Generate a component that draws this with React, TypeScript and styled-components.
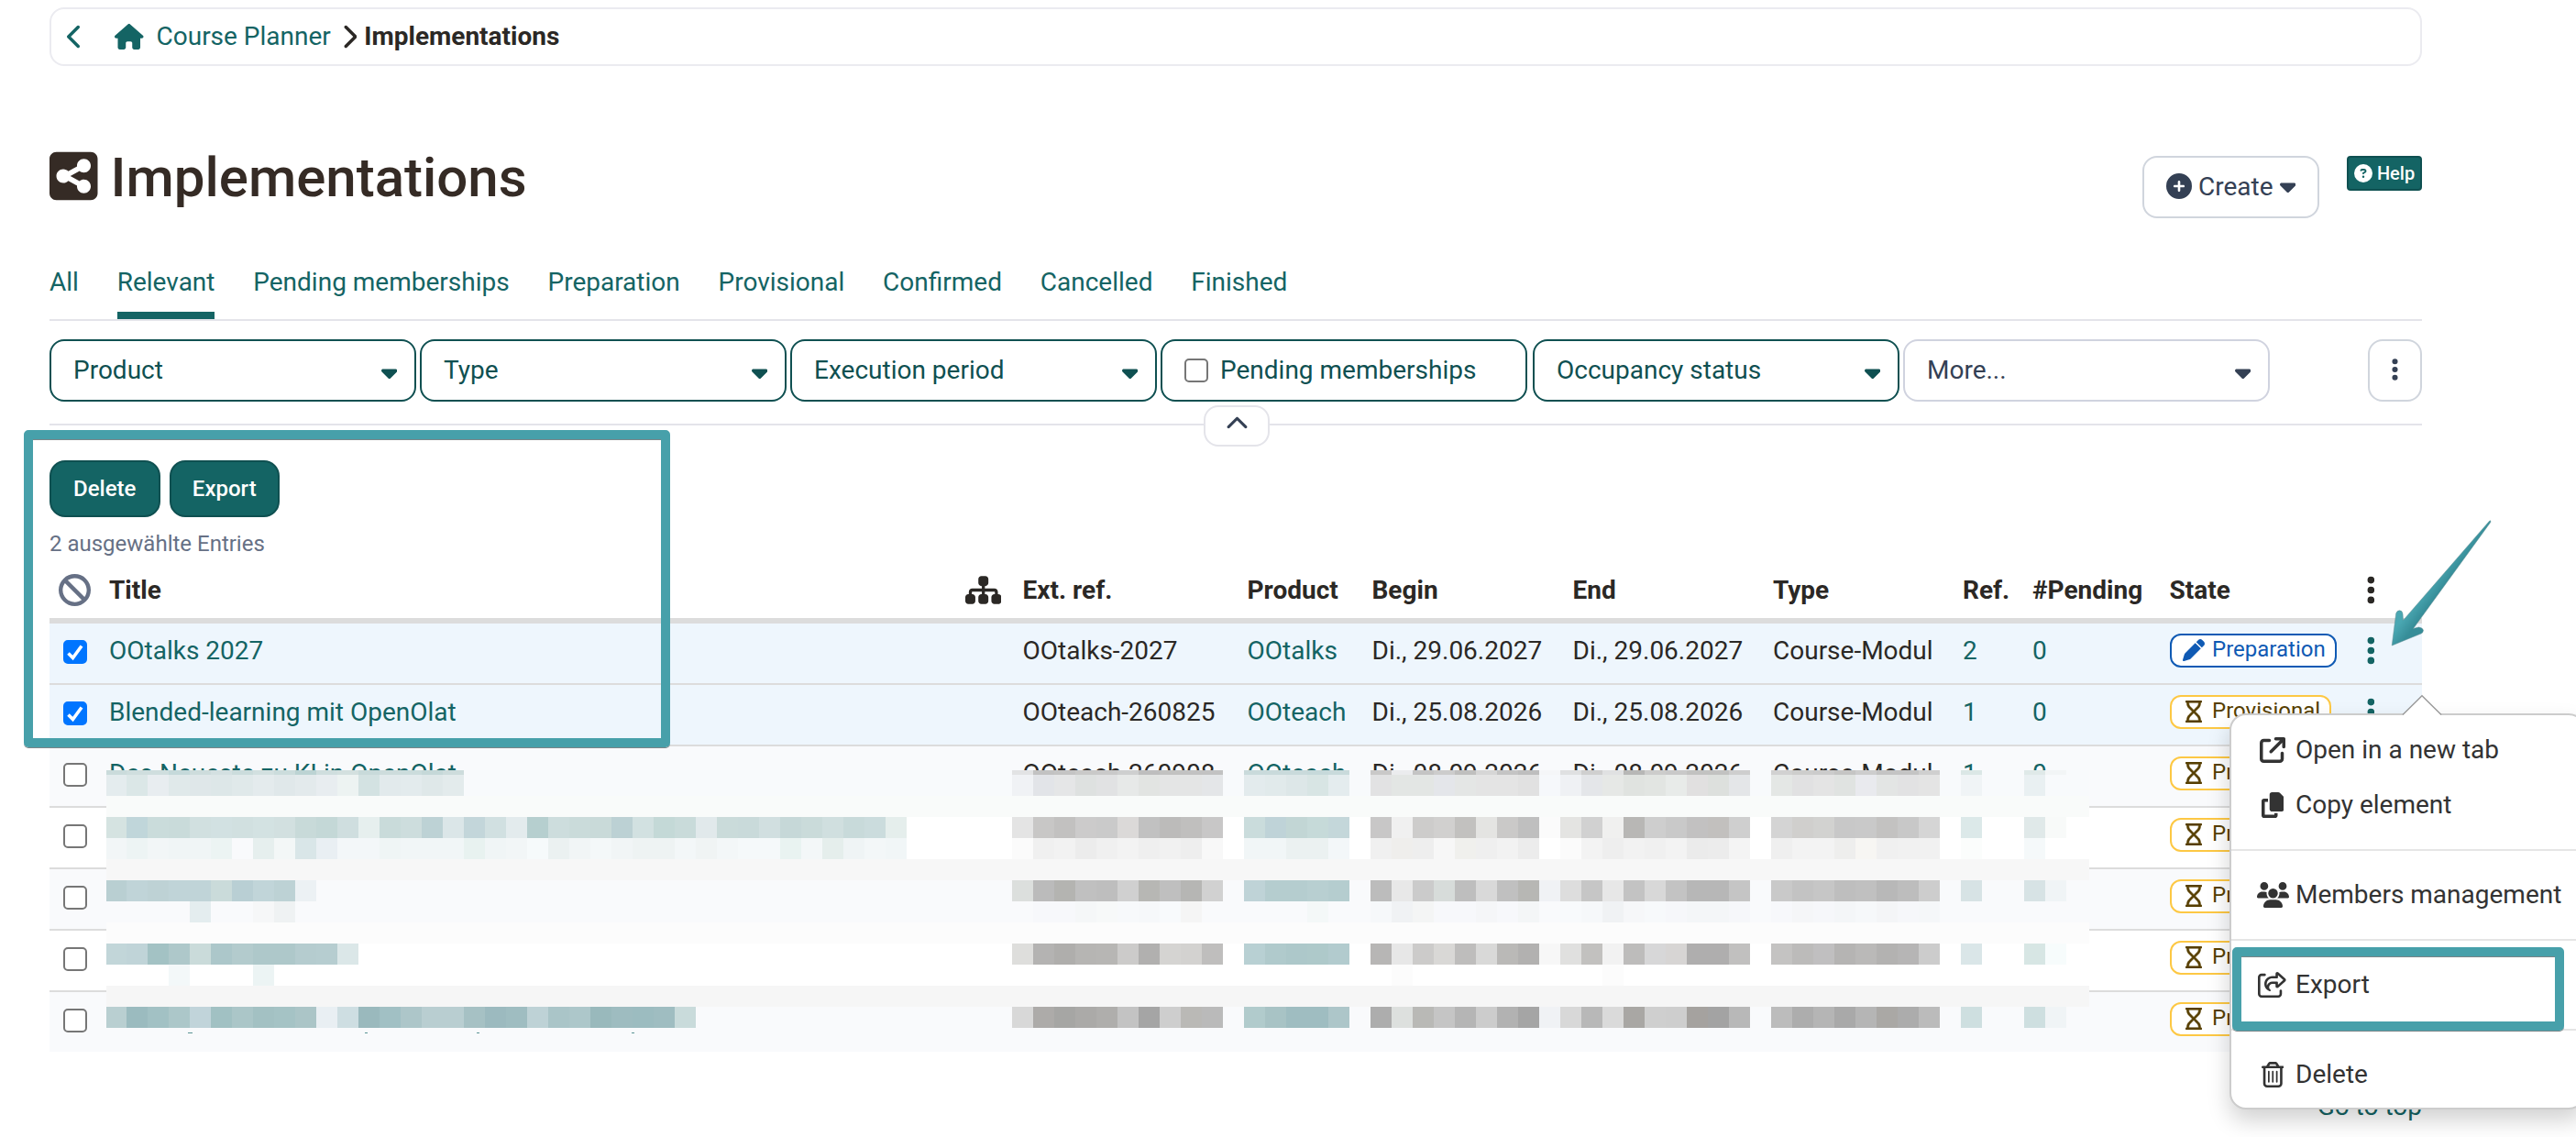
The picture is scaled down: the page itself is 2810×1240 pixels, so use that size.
import React, { FC, ReactNode } from "react";
import styled, { createGlobalStyle, css } from "styled-components";
import {
  FaArrowUpRightFromSquare,
  FaBan,
  FaCaretDown,
  FaChevronLeft,
  FaChevronRight,
  FaChevronUp,
  FaCirclePlus,
  FaCircleQuestion,
  FaCopy,
  FaEllipsisVertical,
  FaHouse,
  FaPen,
  FaRegHourglass,
  FaRegShareFromSquare,
  FaRegTrashCan,
  FaSitemap,
  FaSquareShareNodes,
  FaUsers,
} from "react-icons/fa6";

const GlobalStyle = createGlobalStyle`
  :root {
    --teal: #146464;
    --tealDark: #0f5051;
    --slate: #344054;
    --line: #e4e4ea;
    --text: #2b2825;
    --mark: #47a0aa;
  }
  * { box-sizing: border-box; }
  html, body { margin: 0; padding: 0; background: white; overflow: hidden; }
  body {
    font-family: Roboto, "Liberation Sans", sans-serif;
    font-size: 28px;
    line-height: 40px;
    color: var(--text);
  }
`;

const Page = styled.div`
  position: relative;
  width: 2810px;
  height: 1240px;
  padding: 8px 168px 0 54px;
  overflow: hidden;
  background: white;
`;

/* $w is the width of the glyph's view box, every glyph is 512 high */
const Icon = styled.span<{ $size?: number; $color?: string; $w?: number }>`
  display: inline-flex;
  flex: none;
  font-size: ${(p) => p.$size || 28}px;
  color: ${(p) => p.$color || "inherit"};
  svg {
    flex: none;
    height: 1em;
    width: ${(p) => (p.$w || 512) / 512}em;
  }
`;

/* breadcrumb */
const Breadcrumb = styled.nav`
  display: flex;
  align-items: center;
  height: 64px;
  padding-left: 17px;
  border: 2px solid #ebebf0;
  border-radius: 16px;
`;
const BackLink = styled.a`
  display: flex;
  width: 52px;
  color: var(--teal);
`;
const Crumb = styled.a`
  display: flex;
  align-items: center;
  gap: 14px;
  margin-right: 11px;
  color: var(--teal);
`;
const CurrentCrumb = styled.span`
  margin-left: 8px;
  font-weight: 700;
`;

/* heading */
const Heading = styled.header`
  display: flex;
  height: 202px;
  padding-top: 85px;
`;
const PageTitle = styled.h1`
  display: flex;
  align-items: center;
  gap: 14px;
  flex: 1;
  height: 74px;
  margin: 0;
  font-size: 60px;
  font-weight: 500;
  color: #352b25;
  ${Icon} {
    margin-top: -4px;
  }
`;
const CreateButton = styled.button`
  display: flex;
  align-items: center;
  justify-content: center;
  gap: 7px;
  width: 193px;
  height: 68px;
  margin: 13px 30px 0 0;
  padding: 0 0 2px;
  border: 2px solid #d0d5dd;
  border-radius: 16px;
  background: white;
  font: inherit;
  color: var(--slate);
`;
const ButtonText = styled.span`
  padding-top: 2px;
`;
const HelpButton = styled.button`
  display: flex;
  align-items: center;
  justify-content: center;
  gap: 5px;
  width: 82px;
  height: 38px;
  margin: 13px 0 0;
  padding: 0;
  border: 2px solid var(--tealDark);
  border-radius: 4px;
  background: var(--teal);
  font: 500 20px Roboto, sans-serif;
  color: white;
`;

/* tabs */
const Tabs = styled.div`
  display: flex;
  gap: 41.8px;
  height: 76px;
  border-bottom: 2px solid var(--line);
`;
const Tab = styled.a<{ $active?: boolean }>`
  height: 74px;
  padding-top: 1px;
  line-height: 65px;
  border-bottom: 8px solid ${(p) => (p.$active ? "var(--teal)" : "transparent")};
  color: var(--teal);
`;

/* filters */
const Filters = styled.div`
  position: relative;
  display: flex;
  gap: 4px;
  height: 114px;
  padding-top: 20px;
  border-bottom: 2px solid var(--line);
`;
const FilterButton = styled.button<{ $muted?: boolean; $check?: boolean }>`
  display: flex;
  align-items: center;
  gap: 13px;
  width: 400px;
  height: 68px;
  margin: 0 ${(p) => (p.$check ? 2 : 0)}px 0 0;
  padding: 0 19px 1px 24px;
  border: 2px solid ${(p) => (p.$muted ? "#d0d3df" : "var(--tealDark)")};
  border-radius: 16px;
  background: white;
  font: inherit;
  color: ${(p) => (p.$muted ? "var(--slate)" : "var(--tealDark)")};
  > ${Icon} {
    margin: 4px 0 0 auto;
  }
`;
const SettingsButton = styled.button`
  display: flex;
  align-items: center;
  justify-content: center;
  width: 59px;
  height: 68px;
  margin-left: auto;
  padding: 0 0 3px;
  border: 2px solid #d0d5dd;
  border-radius: 16px;
  background: white;
  color: var(--slate);
`;
const CollapseButton = styled.button`
  position: absolute;
  left: 1259px;
  bottom: -25px;
  display: flex;
  align-items: center;
  justify-content: center;
  width: 72px;
  height: 45px;
  padding: 0 0 4px;
  border: 2px solid var(--line);
  border-radius: 16px;
  background: white;
  color: var(--slate);
`;

/* batch actions */
const BatchActions = styled.div`
  display: flex;
  gap: 10px;
  margin: 38px 0 9px;
`;
const BatchButton = styled.button`
  width: 120.5px;
  height: 62px;
  padding: 0 0 1px;
  border: 2px solid var(--tealDark);
  border-radius: 17px;
  background: var(--teal);
  font: 500 24px Roboto, sans-serif;
  color: white;
`;
const Selected = styled.p`
  height: 39px;
  margin: 0;
  padding-top: 1px;
  font-size: 24px;
  line-height: 38px;
  color: #667085;
`;

/* table */
const columns = css`
  display: grid;
  grid-template-columns: 65px 934px 62.5px 245px 136px 219px 218.5px 207px 76px 149.5px 215px 60px;
`;
const HeadRow = styled.div`
  ${columns}
  align-items: center;
  height: 68px;
  border-bottom: 6px solid #dcdcdc;
  font-weight: 700;
  line-height: 42px;
`;
const HeadIcon = styled.span<{ $left?: number }>`
  display: flex;
  padding-left: ${(p) => p.$left || 0}px;
`;
const HeadText = styled.span`
  padding-top: 1px;
`;
const Row = styled.div<{ $bg: string }>`
  ${columns}
  height: 67px;
  padding-top: 9px;
  border-top: 2px solid #dcdcdc;
  background: ${(p) => p.$bg};
  line-height: 42px;
  &:nth-child(2) {
    height: 65px;
    border-top: 0;
  }
`;
const Link = styled.a`
  color: var(--teal);
`;
const RowMenu = styled.a`
  display: flex;
  align-items: center;
  height: 40px;
  color: var(--teal);
`;
const Box = styled.span<{ $checked?: boolean }>`
  display: flex;
  flex: none;
  align-items: center;
  justify-content: center;
  width: 26px;
  height: 26px;
  border: 2px solid ${(p) => (p.$checked ? "#0075ff" : "#767676")};
  border-radius: 5px;
  background: ${(p) => (p.$checked ? "#0075ff" : "white")};
`;
const SelectCell = styled.span`
  padding: 9px 0 0 15px;
`;
const Badge = styled.span<{ $kind: string }>`
  display: flex;
  align-items: center;
  width: max-content;
  height: 37px;
  margin-top: 2px;
  padding: 0 10px 2px 12px;
  border: 2px solid ${(p) => (p.$kind === "Preparation" ? "#0f5ab4" : "#fdc844")};
  border-radius: 12px;
  background: white;
  font-size: 24px;
  line-height: 33px;
  color: ${(p) => (p.$kind === "Preparation" ? "#0f5ab4" : "#573f00")};
  ${Icon} {
    width: 24px;
    margin-right: 8.5px;
    justify-content: center;
  }
`;
const GoTop = styled.a`
  display: block;
  margin-top: 40px;
  text-align: right;
  color: var(--teal);
`;

/* mosaic that hides the confidential cells */
const Mosaic = styled.div`
  position: absolute;
  left: 116px;
  top: 840px;
  width: 2163px;
`;
const Band = styled.div<{ $h: number; $bg: string }>`
  display: grid;
  grid-template-columns: 22px repeat(93, 23px) 2px;
  grid-template-rows: ${(p) => p.$h}px;
  height: ${(p) => p.$h}px;
  background: ${(p) => p.$bg};
`;
const Descenders = styled.div`
  display: grid;
  grid-template-columns: 89px 5px 188px 3px 119px 3px 166px 3px;
  height: 1px;
  > :nth-child(even) {
    background: #5c9495;
  }
`;

/* row menu */
const Menu = styled.div`
  position: absolute;
  left: 2432px;
  top: 778px;
  width: 388px;
  height: 432px;
  padding: 8px 0;
  border: 2px solid #ccc;
  border-radius: 18px;
  background: white;
  box-shadow: 0 12px 24px rgba(0, 0, 0, 0.18);
`;
const MenuItem = styled.div`
  display: flex;
  align-items: center;
  height: 60px;
  padding-left: 24px;
  line-height: 60px;
  color: #333;
  ${Icon} {
    width: 42px;
    margin-right: 4px;
    justify-content: center;
  }
`;
const Divider = styled.hr`
  height: 2px;
  margin: 18px 0;
  border: 0;
  background: #e5e5e5;
`;
const MenuTip = styled.svg`
  position: absolute;
  left: 2620px;
  top: 757px;
`;

/* annotations */
const Frame = styled.div<{ $x: number; $y: number; $w: number; $h: number }>`
  position: absolute;
  left: ${(p) => p.$x}px;
  top: ${(p) => p.$y}px;
  width: ${(p) => p.$w}px;
  height: ${(p) => p.$h}px;
  border-radius: 5px;
  border: 10px solid var(--mark);
  box-shadow: 0 1px 0 #7a8588, inset 0 1px 0 #7a8588;
`;
const Arrow = styled.svg`
  position: absolute;
  left: 2600px;
  top: 560px;
`;

const tabs = [
  "All", "Relevant", "Pending memberships", "Preparation",
  "Provisional", "Confirmed", "Cancelled", "Finished",
];

interface IEntry {
  title?: string;
  ref?: string;
  product?: string;
  date?: string;
  type?: string;
  refs?: string;
  pending?: string;
  state: string;
  checked?: boolean;
  bg: string;
}

const entries: IEntry[] = [
  { title: "OOtalks 2027", ref: "OOtalks-2027", product: "OOtalks", date: "Di., 29.06.2027", type: "Course-Modul", refs: "2", pending: "0", state: "Preparation", checked: true, bg: "#eef6fd" },
  { title: "Blended-learning mit OpenOlat", ref: "OOteach-260825", product: "OOteach", date: "Di., 25.08.2026", type: "Course-Modul", refs: "1", pending: "0", state: "Provisional", checked: true, bg: "#eef6fd" },
  { title: "Das Neueste zu KI in OpenOlat", ref: "OOteach-260908", product: "OOteach", date: "Di., 08.09.2026", type: "Course-Modul", refs: "1", pending: "0", state: "Provisional", bg: "#f9fafc" },
  { state: "Provisional", bg: "#fff" },
  { state: "Provisional", bg: "#f9fafc" },
  { state: "Provisional", bg: "#fff" },
  { state: "Provisional", bg: "#f9fafc" },
];

interface IBand {
  h: number;
  bg: string;
  runs: [number, string][];
}

// a run is a first column and the colours of the cells that follow it
const bands: IBand[] = [
  {
    h: 5, bg: "#f8fafc", runs: [
      [1, "cadbdb cfdede cfdede c5d9da cddcdc d3e0e1 cbdcdc d2e0e0 cbdcdc bcd3d3 cfdede d3e0df c8dada cddcdc cbdcdc c5d8d8 cddcdc"],
      [44, "e2e3e4 c2c2c2 c4c4c4 c9c9c8 c9c9c9 cecfcf bebebe c2c2c1 c2c2c2 c2c2c2"],
      [55, "c9dadb c9dadb c9dadb c6d9da c9dadb"],
      [61, "c9c8c8 ebecee c4c4c4 cccccc bfbfbe d6d6d6 c4c4c4 bebebe f5f6f8"],
      [70, "dfe0e1 cfcfcf e0e1e2 b7b7b6 cccccb c9c9c9 c2c2c1 c2c2c1 cecece"],
      [80, "d1d1d1 cdcdcc cbcbcb c5c5c4 cdcdcd c4c4c4 c4c4c4 cfcfcf"],
      [89, "dbe7e6"], [92, "dfe9e8 f2f5f6"],
    ],
  },
  {
    h: 23, bg: "#f8fafc", runs: [
      [1, "e4ecee dbe7e7 e8edf0 e0e9ea dfe7e9 dde7e8 e0e9ea e4ebed e0e8ea e3eaec e8edf0 edf3f2 d3e2e2 e2eaec e3ebed dfe8e9 e3ebec"],
      [44, "f0f2f5 e2e4e8 e5e6e7 dee1e0 e1e2e3 e7e9e8 e2e4e2 e4e5e5 e4e5e5 e4e6e8"],
      [55, "e3ebed e1eaeb dde7e8 d8e5e4 e4ecee"],
      [61, "e2e2e3 e3e6e4 e3e6e4 e4e6ea e4e6e5 e4e4e4 e4e4e4 e1e1e1 f6f8fb"],
      [70, "eff1f4 e4e6e9 e6e8e6 e0e3e0 e2e5e2 e8ebe9 e1e0e0 dde0dd e4e6e8"],
      [80, "e4e7e5 e1e1e2 e4e4e4 e0e3e1 e9eaee e3e5e4 e2e2e3 e4e4e4"],
      [89, "f0f4f6"], [92, "e9f0f2 f8fafc"],
    ],
  },
  { h: 23, bg: "#f9fbfa", runs: [] },
  {
    h: 23, bg: "#fff", runs: [
      [1, "d5e3e1 c0d6da cadcdb c9dbda d1e0e0 d2e1e2 d1e0e0 d3e2e2 d2e0e0 c8dad9 c4d8d7 cfdedf e6efee c9dbda cddddd bdd2d5 dbe6e8 c3d6da d1e0e1 e3ebed b6cfcf cddddd cadbda c9dad9 bcd1d4 d2e1e1 c4d9d7 c9dbda e1e9eb cadbda c9dada d1dfe0 c6d8d8 cadbda d0dfdf c8dada cbdcdd e5eeec"],
      [44, "e4e4e4 c8c7c6 c2c1c0 cccbcb cacaca dbd9d8 c1c1c1 bcbbba c0bfbe c8c7c7"],
      [55, "cadcdc bfd3d8 c2d6d5 c6dad9 c4d7da"],
      [61, "c8c7c7 f0f0f0 cdcccb d1d0cf c2c1bf e4e4e2 cac9c8 bfbfbf fbfbfb"],
      [70, "e4e4e2 d1d1d1 f0f0ef b8b7b5 cecece c9c9c9 c2c1c1 c2c0be cfcfcf"],
      [80, "d4d4d4 d0cfcd d2d2d0 c8c8c8 c9c9c9 c3c2c1 c8c8c8 d5d5d5"],
      [89, "dce9e9"], [92, "e0e9e9 f8faf9"],
    ],
  },
  {
    h: 23, bg: "#fff", runs: [
      [1, "f2f6f7 edf4f4 f2f6f7 f0f5f6 f0f5f6 ecf4f3 f9fafc e6efee f3f7f7 d9e6e8 e9eff3 f3f7f9 f3f7f9 eff5f5 f1f6f7 f1f6f7 f1f6f7 e8f2f0 f0f5f6 f2f6f7 f6fafb ebf1f1 f1f5f6 f4f8f9 f1f5f6 eef3f3 eef3f3 f3f7f8 f0f4f4 f3f7f8 f5f9fa f5f9fa e9f3f1 f3f7f8 e5eeec eff4f5 f3f7f8 f1f6f7"],
      [44, "fbfbfb f0f0f0 f2f2f2 ececec f0f0f0 f3f3f3 efefef f1f1f1 eeeeee f8f8f8"],
      [55, "f1f6f7 f1f6f7 ebf1f1 ebf1f1 f3f7f9"],
      [61, "f0f0f0 efeeec eeeeee f7f7f7 f0f0ed efefef f2f2f2 ececec ffffff"],
      [70, "fbfbfb f3f3f3 eeeeee f2f2f2 f0f0f0 f3f3f3 ebebeb ececec f4f4f4"],
      [80, "efefef f3f3f3 f3f3f3 eeeeed f7f6f3 f0f0f0 f1f1f1 f1f1f1"],
      [89, "fbfdfc"], [92, "f5f9fa"],
    ],
  },
  { h: 23, bg: "#f7f7f7", runs: [] },
  {
    h: 23, bg: "#f9fafc", runs: [
      [1, "b9cfd2 c0d4d8 bed2d5 c0d4d8 c0d4d8 cadbda b9cfd4 c1d5d9 bdd2d5 ecf1f4"],
      [44, "dcdfdd bbbbbb b4b4b1 c0c0c0 bebebe d0d0d0 b7b7b4 bfbfbf b6b6b4 d1d1d1"],
      [55, "bfd3d7 b5cdcf b5cdcf b8cfd1 b5cdcf"],
      [61, "bcbcbc e8e8e8 cbcbcb d7dcda bebebe d9d9d9 c0c0c0 b7b7b4 f0f2f5"],
      [70, "dddddd c6c6c6 e7e7e7 c3c3c3 d8d8d8 c3c3c3 b7b7b7 b7b7b7 c5c5c5"],
      [80, "c9c9c9 c3c3c3 c6c6c6 bebebe c0c0c0 b8b8b8 bdbdbd cdcdcd"],
      [89, "d7e3e5"], [92, "d7e3e5 f0f4f6"],
    ],
  },
  {
    h: 23, bg: "#f9fafc", runs: [
      [5, "e4edef"], [8, "f6f7f8 eff2f3"],
      [45, "f7f8fb f7f8fb f5f7f8 f7f9f9 f7f9fb f6f8fa f8fafc f5f5f5"],
      [58, "f4f8f8"],
      [61, "f6f8fa f0f2f4 f4f5f5 f7f8fb f7f8fb f5f6f8 f7f8fb f4f6f7"],
      [70, "f8fafc f6f8fa f0f2f4 f6f7f9 f7f9fb f6f7fa f4f6f8 f4f6f8 f6f7fa"],
      [80, "f7f8fb f5f6f8 f6f7fa f4f6f8 f6f8fa f4f5f7 f6f7fa f5f7f9"],
    ],
  },
  { h: 23, bg: "#fcfcfc", runs: [] },
  {
    h: 23, bg: "#fff", runs: [
      [1, "c2d6d9 c0d4d8 a3c2c4 aec8ca cadbda acc7ca b3cbcd aec8ca aec8ca b5cccf b6cdd0 dbe7e8"],
      [44, "dededc b4b3b2 afaeac b6b5b3 b7b6b4 cccbca b1b0af d5d4d2 d3d2d0 bfbebd"],
      [55, "b8d0d3 b0cacc adc8ca aec9ca b2cbce"],
      [61, "b7b6b5 e7e7e7 cccbca d9d8d6 bebdbc d9d9d8 bab9b7 b2b1b0 f7f7f7"],
      [70, "e0e0df c2c1bf f2f2f2 bdbcbb d7d7d8 d7d5d4 afaeae afaeae c1c0bf"],
      [80, "c4c3c2 bcbbba c0bfc0 b5b4b3 bab9b8 b3b2b1 b6b5b5 cccccc"],
      [89, "dae6e8"], [92, "d7e6e4 f7fcfc"],
    ],
  },
  { h: 23, bg: "#fff", runs: [[4, "f3f8f9"], [8, "ecf4f4"], [62, "fcfcfc"], [72, "fcfcfc"]] },
  { h: 23, bg: "#f6f6f6", runs: [] },
  {
    h: 23, bg: "#f9fafc", runs: [
      [1, "b9cfd1 9bbbbf a2c1c4 acc7c9 c1d4da a1c1c3 abc6c8 a3c1c3 a5c3c5 abc5c7 e9eff3 cedee2 9ab9bd a1c0c4 adc6c9 b9ced1 b9ced1 a6c1c4 9cbabf 9fbdc1 bed2d6 aac5c8 adc7ca 99b9bc 9ebcc0 9cbcc0 9fbdc1 c9dbdb"],
      [44, "d8d8d8 adaba9 a6a6a4 abaaa8 afaeac c3c3c3 a5a5a5 cecece bab9b6 bababa"],
      [55, "b1cbcc a8c3c5 9fbdc1 9fbdc1 adc6c9"],
      [61, "adadad dde0de b9b9b6 c5c5c5 b5b5b5 cccccc b2b2b2 a5a5a5 f0f2f5"],
      [70, "d8d8d8 b8b8b8 dadada a9a7a4 cfcfcf cecece a5a29f a3a3a3 b8b8b8"],
      [80, "bcbcbc adadad b5b5b5 a9a9a9 b5b5b5 aaa8a5 acacac bbbbbb"],
      [89, "cedfe0"], [92, "cedfe0 f0f4f6"],
    ],
  },
  { h: 5, bg: "#f9fafc", runs: [] },
];

const Filter: FC<{ label: string; muted?: boolean }> = ({ label, muted }) => (
  <FilterButton $muted={muted}>
    {label}
    <Icon $w={320}><FaCaretDown /></Icon>
  </FilterButton>
);

const Checkbox: FC<{ checked?: boolean }> = ({ checked }) => (
  <Box $checked={checked}>
    {checked && (
      <svg width="22" height="22" viewBox="0 0 22 22">
        <path d="M3.5 12.5L8.5 17.5L18 4.5" fill="none" stroke="white" strokeWidth="3.6" />
      </svg>
    )}
  </Box>
);

const Item: FC<{ icon: ReactNode; w?: number; label: string }> = ({ icon, w, label }) => (
  <MenuItem>
    <Icon $w={w}>{icon}</Icon>
    {label}
  </MenuItem>
);

const EntryRow: FC<{ entry: IEntry }> = ({ entry }) => (
  <Row $bg={entry.bg}>
    <SelectCell><Checkbox checked={entry.checked} /></SelectCell>
    <Link>{entry.title}</Link>
    <span />
    <span>{entry.ref}</span>
    <Link>{entry.product}</Link>
    <span>{entry.date}</span>
    <span>{entry.date}</span>
    <span>{entry.type}</span>
    <Link>{entry.refs}</Link>
    <Link>{entry.pending}</Link>
    <div>
      <Badge $kind={entry.state}>
        {entry.state === "Preparation" ? (
          <Icon $size={24}><FaPen /></Icon>
        ) : (
          <Icon $size={24} $w={384}><FaRegHourglass stroke="currentColor" strokeWidth="12" /></Icon>
        )}
        {entry.state}
      </Badge>
    </div>
    <RowMenu><Icon $size={35} $w={128}><FaEllipsisVertical /></Icon></RowMenu>
  </Row>
);

const HiddenCells: FC = () => (
  <Mosaic>
    {bands.map((band, i) => (
      <Band key={i} $h={band.h} $bg={band.bg}>
        {band.runs.map(([start, colors]) =>
          colors.split(" ").map((color, j) => (
            <span key={start + j} style={{ gridColumn: start + j, gridRow: 1, background: `#${color}` }} />
          ))
        )}
      </Band>
    ))}
    <Descenders>
      <i /><i /><i /><i /><i /><i /><i /><i />
    </Descenders>
  </Mosaic>
);

const App: FC = () => (
  <>
    <GlobalStyle />
    <Page>
      <Breadcrumb>
        <BackLink><Icon $w={320}><FaChevronLeft /></Icon></BackLink>
        <Crumb>
          <Icon $w={576}><FaHouse /></Icon>
          Course Planner
        </Crumb>
        <Icon $w={320}><FaChevronRight /></Icon>
        <CurrentCrumb>Implementations</CurrentCrumb>
      </Breadcrumb>

      <Heading>
        <PageTitle>
          <Icon $size={60} $w={448}><FaSquareShareNodes /></Icon>
          Implementations
        </PageTitle>
        <CreateButton>
          <Icon><FaCirclePlus /></Icon>
          <ButtonText>Create</ButtonText>
          <Icon $w={320}><FaCaretDown /></Icon>
        </CreateButton>
        <HelpButton>
          <Icon $size={20}><FaCircleQuestion /></Icon>
          Help
        </HelpButton>
      </Heading>

      <Tabs>
        {tabs.map((tab) => (
          <Tab key={tab} $active={tab === "Relevant"}>{tab}</Tab>
        ))}
      </Tabs>

      <Filters>
        <Filter label="Product" />
        <Filter label="Type" />
        <Filter label="Execution period" />
        <FilterButton $check>
          <Box />
          Pending memberships
        </FilterButton>
        <Filter label="Occupancy status" />
        <Filter label="More..." muted />
        <SettingsButton><Icon $w={128}><FaEllipsisVertical /></Icon></SettingsButton>
        <CollapseButton><Icon $size={25}><FaChevronUp /></Icon></CollapseButton>
      </Filters>

      <BatchActions>
        <BatchButton>Delete</BatchButton>
        <BatchButton>Export</BatchButton>
      </BatchActions>
      <Selected>2 ausgewählte Entries</Selected>

      <div>
        <HeadRow>
          <HeadIcon $left={10}><Icon $size={35} $color="#667085"><FaBan /></Icon></HeadIcon>
          <HeadText>Title</HeadText>
          <HeadIcon><Icon $size={35} $w={576}><FaSitemap /></Icon></HeadIcon>
          <HeadText>Ext. ref.</HeadText>
          <HeadText>Product</HeadText>
          <HeadText>Begin</HeadText>
          <HeadText>End</HeadText>
          <HeadText>Type</HeadText>
          <HeadText>Ref.</HeadText>
          <HeadText>#Pending</HeadText>
          <HeadText>State</HeadText>
          <HeadIcon><Icon $size={35} $w={128}><FaEllipsisVertical /></Icon></HeadIcon>
        </HeadRow>
        {entries.map((entry, i) => (
          <EntryRow key={i} entry={entry} />
        ))}
      </div>
      <GoTop>Go to top</GoTop>

      <HiddenCells />

      <Menu>
        <Item icon={<FaArrowUpRightFromSquare />} label="Open in a new tab" />
        <Item icon={<FaCopy />} w={448} label="Copy element" />
        <Divider />
        <Item icon={<FaUsers />} w={640} label="Members management" />
        <Divider />
        <Item icon={<FaRegShareFromSquare />} w={576} label="Export" />
        <Divider />
        <Item icon={<FaRegTrashCan />} w={448} label="Delete" />
      </Menu>
      <MenuTip width="44" height="24" viewBox="0 0 44 24">
        <path d="M0.5 23.5L22 2L43.5 23.5Z" fill="white" />
        <path d="M1 22.5L22 1.8L43 22.5" fill="none" stroke="#999" strokeWidth="1.4" />
      </MenuTip>

      <Frame $x={26} $y={469} $w={705} $h={346} />
      <Frame $x={2435} $y={1033} $w={362} $h={91} />
      <Arrow width="130" height="150" viewBox="0 0 130 150">
        <defs>
          <linearGradient id="shaft" gradientUnits="userSpaceOnUse" x1="38" y1="92" x2="50" y2="101">
            <stop offset="0" stopColor="#4aa7b2" />
            <stop offset="1" stopColor="#368d98" />
          </linearGradient>
        </defs>
        <path
          d="M116 7.7Q117.500 8 116.800 9.500L32.500 125.500L38.500 124Q43 124.500 43.500 127.500Q43.300 130 41 131L9.200 144L13.700 109Q14.500 106 17.500 105.800Q20.600 106 21 109.500L21.500 116.500Z"
          fill="url(#shaft)"
          stroke="#5d8a90"
          strokeWidth="0.5"
        />
      </Arrow>
    </Page>
  </>
);

export default App;
